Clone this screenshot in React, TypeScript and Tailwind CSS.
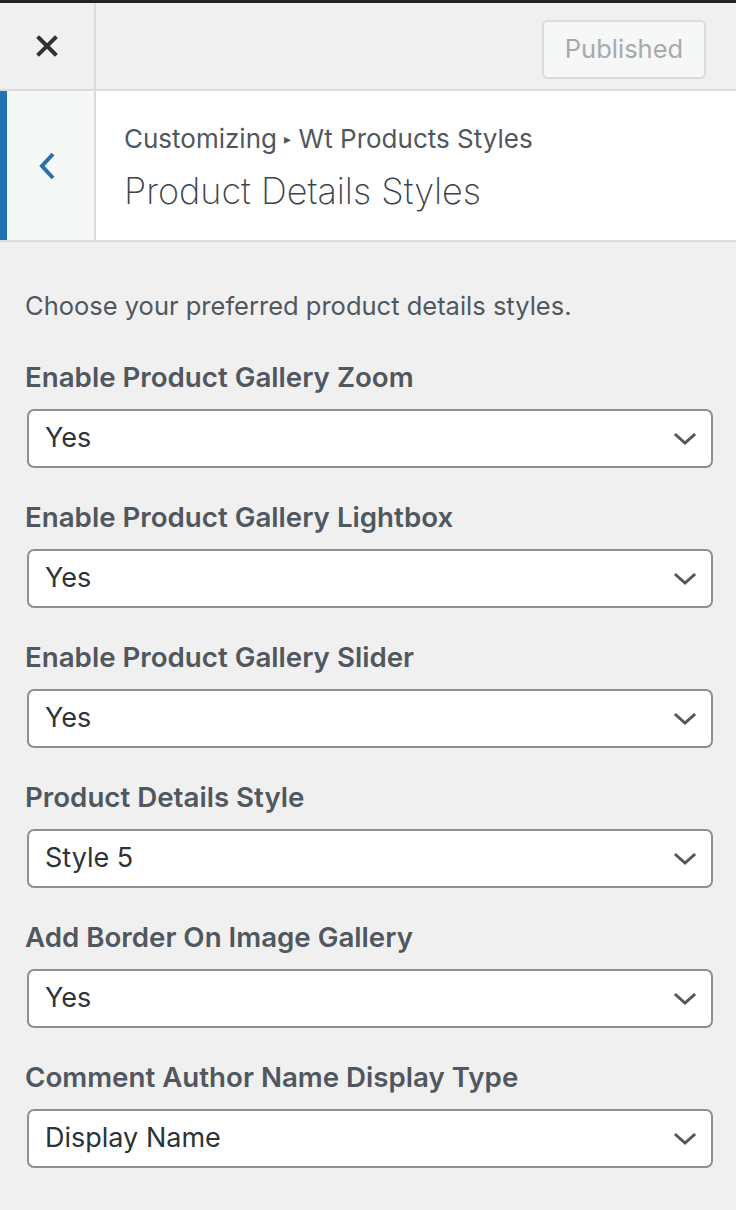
import React from 'react';

const CONTROLS = [
  { label: 'Enable Product Gallery Zoom', value: 'Yes' },
  { label: 'Enable Product Gallery Lightbox', value: 'Yes' },
  { label: 'Enable Product Gallery Slider', value: 'Yes' },
  { label: 'Product Details Style', value: 'Style 5' },
  { label: 'Add Border On Image Gallery', value: 'Yes' },
  { label: 'Comment Author Name Display Type', value: 'Display Name' },
];

const font = { fontFamily: 'Inter, "Liberation Sans", sans-serif' };

const SelectBox: React.FC<{ value: string }> = ({ value }) => (
  <div className="mt-[14px] ml-[2px] w-[686px] h-[59px] bg-white border-2 border-[#8c8f94] rounded-[7px] flex items-center justify-between pl-[16px] pr-[14px]">
    <span className="text-[27px] text-[#2c3338]">{value}</span>
    <svg width="24" height="24" viewBox="0 0 24 24" fill="none">
      <polyline points="3,8 12,16 21,8" stroke="#50575e" strokeWidth="3" strokeLinecap="square" />
    </svg>
  </div>
);

export default function App() {
  return (
    <div className="w-[736px] h-[1210px] bg-[#f0f0f1] overflow-hidden" style={font}>
      {/* top dark strip */}
      <div className="h-[3px] bg-[#1d2327]" />

      {/* header */}
      <div className="h-[88px] flex border-b-2 border-[#dcdcde]">
        <div className="w-[96px] flex items-center justify-center border-r-2 border-[#dcdcde]">
          <svg width="22" height="22" viewBox="0 0 22 22">
            <path d="M3 3 L19 19 M19 3 L3 19" stroke="#2c3338" strokeWidth="4" strokeLinecap="square" />
          </svg>
        </div>
        <div className="flex-1 flex items-start justify-end pr-[30px] pt-[17px]">
          <div className="w-[164px] h-[59px] border-2 border-[#dcdcde] bg-[#f6f7f7] rounded-[6px] flex items-center justify-center text-[25.5px] text-[#a7aaad]">
            Published
          </div>
        </div>
      </div>

      {/* section title */}
      <div className="h-[151px] flex bg-white border-b-2 border-[#dcdcde]">
        <div className="w-[96px] flex items-center justify-center bg-[#f6f7f7] border-l-[7px] border-[#2271b1] border-r-2 border-r-[#dcdcde]">
          <svg width="20" height="30" viewBox="0 0 20 30" className="mr-[6px]">
            <polyline points="15,3 4,15 15,27" fill="none" stroke="#2271b1" strokeWidth="4" />
          </svg>
        </div>
        <div className="flex-1 pl-[28px] pt-[30px]">
          <div className="text-[26px] leading-[36px] text-[#50575e] whitespace-nowrap">
            Customizing <span className="text-[14px] align-middle relative -top-[2px]">▸</span> Wt Products Styles
          </div>
          <div className="mt-[10px] text-[36px] leading-[44px] font-extralight text-[#3c434a]">
            Product Details Styles
          </div>
        </div>
      </div>

      {/* controls */}
      <div className="flex flex-col pl-[25px] pr-[23px] pt-[47px]">
        <p className="h-[34px] leading-[34px] text-[25.5px] text-[#50575e] whitespace-nowrap">
          Choose your preferred product details styles.
        </p>
        {CONTROLS.map((c, i) => (
          <div key={c.label} className={i === 0 ? 'mt-[36px]' : 'mt-[31px]'}>
            <div className="h-[36px] leading-[36px] text-[27.7px] font-semibold text-[#50575e] whitespace-nowrap">
              {c.label}
            </div>
            <SelectBox value={c.value} />
          </div>
        ))}
      </div>
    </div>
  );
}
